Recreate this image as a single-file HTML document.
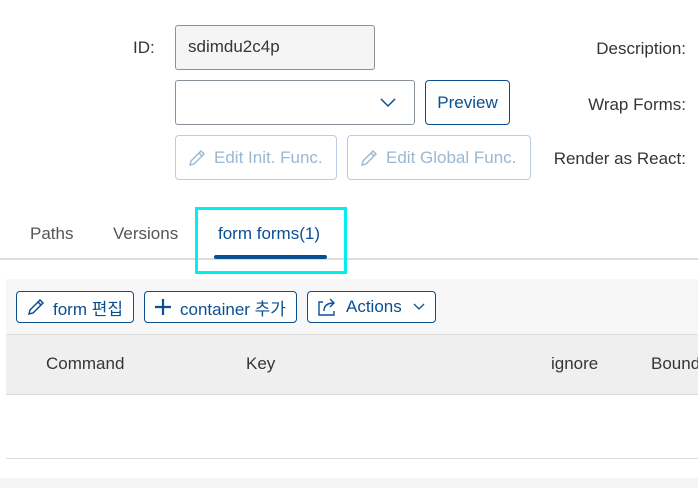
<!DOCTYPE html>
<html><head><style>
*{box-sizing:border-box;margin:0;padding:0}
body{width:698px;height:488px;overflow:hidden;background:#fff;font-family:"Liberation Sans","Noto Sans CJK KR",sans-serif;position:relative;color:#32363a}
.a{position:absolute}
.lbl{font-size:17px;color:#32363a;text-align:right}
.btn{position:absolute;border:1px solid #0a4f92;border-radius:4px;color:#0a4f92;font-size:17px;display:flex;align-items:center;background:#fff}
.dis{position:absolute;border:1px solid #b8cde3;border-radius:4px;color:#9bb7d3;font-size:17px;display:flex;align-items:center}
</style></head><body>
<div class="a lbl" style="left:133px;top:38px">ID:</div>
<div class="a" style="left:175px;top:25px;width:200px;height:45px;background:#f5f5f5;border:1px solid #89919a;border-radius:3px;font-size:17px;padding:11px 12px">sdimdu2c4p</div>
<div class="a" style="left:175px;top:80px;width:240px;height:45px;border:1px solid #89919a;border-radius:3px"></div>
<svg class="a" style="left:380px;top:98px" width="16" height="10"><path d="M1 1l7 7 7-7" stroke="#0a4f92" stroke-width="1.5" fill="none"/></svg>
<div class="btn" style="left:425px;top:80px;width:85px;height:45px;justify-content:center">Preview</div>
<div class="dis" style="left:175px;top:135px;width:162px;height:45px;padding-left:12px">
<svg width="18" height="18" style="margin-right:8px"><path d="M2 16l1-4L13 2l3 3L6 15z M11 4l3 3" stroke="#9bb7d3" stroke-width="1.4" fill="none"/></svg>Edit Init. Func.</div>
<div class="dis" style="left:347px;top:135px;width:184px;height:45px;padding-left:12px">
<svg width="18" height="18" style="margin-right:8px"><path d="M2 16l1-4L13 2l3 3L6 15z M11 4l3 3" stroke="#9bb7d3" stroke-width="1.4" fill="none"/></svg>Edit Global Func.</div>
<div class="a lbl" style="left:540px;top:39px;width:146px">Description:</div>
<div class="a lbl" style="left:540px;top:95px;width:146px">Wrap Forms:</div>
<div class="a lbl" style="left:520px;top:149px;width:166px">Render as React:</div>

<div class="a" style="left:30px;top:224px;font-size:17px;color:#555">Paths</div>
<div class="a" style="left:113px;top:224px;font-size:17px;color:#555">Versions</div>
<div class="a" style="left:218px;top:224px;font-size:17px;color:#0a4f92">form forms(1)</div>
<div class="a" style="left:0;top:258px;width:698px;height:2px;background:#ddd"></div>
<div class="a" style="left:214px;top:255px;width:113px;height:4px;background:#0a4f92;border-radius:2px"></div>
<div class="a" style="left:195px;top:207px;width:152px;height:67px;border:3px solid #00f0f0"></div>

<div class="a" style="left:6px;top:279px;width:692px;height:56px;background:#f7f7f7"></div>
<div class="btn" style="left:16px;top:291px;width:118px;height:32px;padding-left:10px">
<svg width="18" height="18" style="margin-right:8px"><path d="M2 16l1-4L13 2l3 3L6 15z M11 4l3 3" stroke="#0a4f92" stroke-width="1.5" fill="none"/></svg>form 편집</div>
<div class="btn" style="left:144px;top:291px;width:153px;height:32px;padding-left:9px">
<svg width="18" height="18" style="margin-right:8px"><path d="M9 1v16M1 9h16" stroke="#0a4f92" stroke-width="2.2"/></svg>container 추가</div>
<div class="btn" style="left:307px;top:291px;width:129px;height:32px;padding-left:10px">
<svg width="20" height="18" style="margin-right:8px"><path d="M5 4H1v13h15v-4 M6 13c0-6 4-8 10-8 M12 1l4 4-4 4" stroke="#0a4f92" stroke-width="1.4" fill="none"/></svg>Actions
<svg width="12" height="8" style="margin-left:11px"><path d="M1 1l5 5 5-5" stroke="#0a4f92" stroke-width="1.3" fill="none"/></svg></div>

<div class="a" style="left:6px;top:334px;width:692px;height:61px;background:#efefef;border-top:1px solid #ddd;border-bottom:1px solid #ddd"></div>
<div class="a" style="left:46px;top:354px;font-size:17px">Command</div>
<div class="a" style="left:246px;top:354px;font-size:17px">Key</div>
<div class="a" style="left:551px;top:354px;font-size:17px">ignore</div>
<div class="a" style="left:651px;top:354px;font-size:17px;white-space:nowrap">Bound</div>
<div class="a" style="left:6px;top:458px;width:692px;height:1px;background:#ddd"></div>
<div class="a" style="left:0;top:478px;width:698px;height:10px;background:#f5f5f5"></div>
</body></html>
